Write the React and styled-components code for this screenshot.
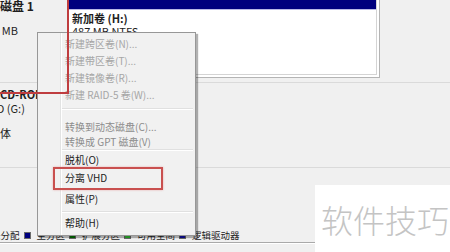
import styled, { createGlobalStyle } from 'styled-components';

const GlobalStyle = createGlobalStyle`
  html, body {
    margin: 0;
    padding: 0;
    background: #f0f0f0;
  }
  body {
    font-family: "Noto Sans CJK SC", "Noto Sans", sans-serif;
  }
`;

const Page = styled.div`
  position: relative;
  width: 450px;
  height: 252px;
  overflow: hidden;
  display: flex;
  flex-direction: column;
  background: #f0f0f0;
  color: #1e1e1e;
`;

const DiskRow = styled.div`
  display: flex;
  flex-shrink: 0;
  height: ${(p) => p.h}px;
  border-bottom: 1px solid #dadada;
`;

const DiskLabel = styled.div`
  width: 68px;
  flex-shrink: 0;
  padding-top: ${(p) => p.top}px;
  line-height: ${(p) => p.lh}px;
  white-space: nowrap;
`;

const LabelLine = styled.div`
  min-height: 1em;
  font-size: ${(p) => p.size || 11}px;
  font-weight: ${(p) => (p.bold ? 700 : 400)};
  margin-left: ${(p) => p.shift || 0}px;
`;

const VolumeBox = styled.div`
  display: flex;
  width: 312px;
  height: 78px;
  box-sizing: border-box;
  background: #fff;
  padding: 0 2px 2px 0;
  border-right: 1px solid #b4b4b4;
  border-bottom: 1px solid #b4b4b4;
`;

const VolumeInner = styled.div`
  flex: 1;
  display: flex;
  flex-direction: column;
  border-right: 1px solid #d4d4d4;
  border-bottom: 1px solid #d4d4d4;
`;

const VolumeHeader = styled.div`
  height: 9px;
  background: #00007e;
  border-bottom: 1px solid #b9b9e6;
`;

const VolumeBody = styled.div`
  padding: 2px 4px;
  font-size: 11px;
  line-height: 13px;
`;

const VolumeName = styled.div`
  font-weight: 700;
`;

const Spacer = styled.div`
  flex: 1;
`;

const Legend = styled.div`
  display: flex;
  align-items: center;
  flex-shrink: 0;
  height: 14px;
  margin-left: -9px;
  font-size: 9.5px;
  white-space: nowrap;
  border-bottom: 1px solid #a9a9a9;
`;

const Swatch = styled.span`
  width: 7px;
  height: 7px;
  margin: 0 6px 0 4px;
  background: ${(p) => p.color};
  border: 1px solid #6a6a6a;
  box-sizing: border-box;
`;

const Footer = styled.div`
  flex-shrink: 0;
  height: 8px;
  border-top: 1px solid #fff;
`;

const Menu = styled.div`
  position: absolute;
  left: 37px;
  top: 32px;
  width: 159px;
  box-sizing: border-box;
  padding: 2px 0 3px;
  border: 1px solid #979797;
  background: linear-gradient(
    to right,
    #f1f1f1 0 22px,
    #e2e3e3 22px 23px,
    #fff 23px 24px,
    #f1f1f1 24px
  );
  box-shadow: 2px 2px 1px rgba(0, 0, 0, 0.3);
  font-size: 10px;
`;

const MenuItem = styled.div`
  height: ${(p) => p.h || 17}px;
  line-height: ${(p) => p.h || 17}px;
  padding-left: 27px;
  white-space: nowrap;
  color: ${(p) => (p.off ? '#a6a6a6' : p.dim ? '#8c8c8c' : '#222')};
`;

const Separator = styled.div`
  margin: ${(p) => p.mt || 0}px 2px ${(p) => p.mb || 0}px 24px;
  border-top: 1px solid #e0e0e0;
  border-bottom: 1px solid #fff;
`;

const RedLine = styled.div`
  position: absolute;
  left: ${(p) => p.x}px;
  top: ${(p) => p.y}px;
  width: ${(p) => p.w}px;
  height: ${(p) => p.h}px;
  background: #bf3d3f;
`;

const RedBox = styled.div`
  position: absolute;
  left: 53px;
  top: 167px;
  width: 110px;
  height: 23px;
  box-sizing: border-box;
  border: 2px solid #c9504f;
  box-shadow: 0 0 2px rgba(220, 90, 90, 0.45);
`;

const Watermark = styled.div`
  position: absolute;
  left: 315px;
  top: 185px;
  right: 0;
  bottom: 0;
  display: flex;
  align-items: center;
  padding-left: 6px;
  background: #fff;
  color: #c4c4c4;
  font-size: 32px;
  font-weight: 300;
  white-space: nowrap;
`;

const legend = [
  { color: '#00007e', label: '主分区' },
  { color: '#007a00', label: '扩展分区' },
  { color: '#33cc33', label: '可用空间' },
  { color: '#1010b0', label: '逻辑驱动器' },
];

export default function App() {
  return (
    <>
      <GlobalStyle />
      <Page>
        <DiskRow h={82}>
          <DiskLabel top={0} lh={12.5}>
            <LabelLine bold size={12}>磁盘 1</LabelLine>
            <LabelLine />
            <LabelLine shift={-19}>487 MB</LabelLine>
          </DiskLabel>
          <VolumeBox>
            <VolumeInner>
              <VolumeHeader />
              <VolumeBody>
                <VolumeName>新加卷 (H:)</VolumeName>
                <div>487 MB NTFS</div>
              </VolumeBody>
            </VolumeInner>
          </VolumeBox>
        </DiskRow>

        <DiskRow h={84}>
          <DiskLabel top={4} lh={14}>
            <LabelLine bold>CD-ROM 0</LabelLine>
            <LabelLine shift={-17}>DVD (G:)</LabelLine>
            <LabelLine />
            <LabelLine shift={-22}>无媒体</LabelLine>
          </DiskLabel>
        </DiskRow>

        <Spacer />

        <Legend>
          <span>未分配</span>
          {legend.map((item) => (
            <>
              <Swatch color={item.color} />
              <span>{item.label}</span>
            </>
          ))}
        </Legend>
        <Footer />

        <Menu>
          <MenuItem off>新建跨区卷(N)...</MenuItem>
          <MenuItem off>新建带区卷(T)...</MenuItem>
          <MenuItem off>新建镜像卷(R)...</MenuItem>
          <MenuItem off>新建 RAID-5 卷(W)...</MenuItem>
          <Separator mt={5} mb={8} />
          <MenuItem dim>转换到动态磁盘(C)...</MenuItem>
          <MenuItem dim h={14}>转换成 GPT 磁盘(V)</MenuItem>
          <Separator />
          <MenuItem>脱机(O)</MenuItem>
          <MenuItem h={20}>分离 VHD</MenuItem>
          <MenuItem h={22}>属性(P)</MenuItem>
          <Separator mt={1} mb={1} />
          <MenuItem h={18}>帮助(H)</MenuItem>
        </Menu>

        <RedLine x={67} y={0} w={2} h={94} />
        <RedLine x={0} y={92} w={69} h={2} />
        <RedBox />

        <Watermark>软件技巧</Watermark>
      </Page>
    </>
  );
}
